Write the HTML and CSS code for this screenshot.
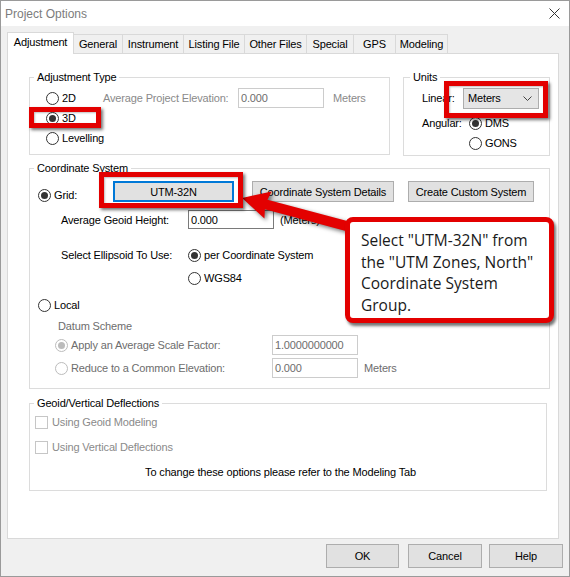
FILE: index.html
```html
<!DOCTYPE html>
<html>
<head>
<meta charset="utf-8">
<link rel="stylesheet" href="styles.css">
</head>
<body>
<div class="window">
  <div class="titlebar">
    <span class="title">Project Options</span>
    <svg class="close" width="11" height="11" viewBox="0 0 11 11"><path d="M0.5 0.5L10.5 10.5M10.5 0.5L0.5 10.5" stroke="#333" stroke-width="1" fill="none"/></svg>
  </div>
  <div class="tabs">
    <div class="tab sel t-adj">Adjustment</div>
    <div class="tab t-gen">General</div>
    <div class="tab t-ins">Instrument</div>
    <div class="tab t-lst">Listing File</div>
    <div class="tab t-oth">Other Files</div>
    <div class="tab t-spc">Special</div>
    <div class="tab t-gps">GPS</div>
    <div class="tab t-mod">Modeling</div>
  </div>
  <div class="panel">
    <div class="toprow">
      <div class="group g-adj">
        <div class="legend">Adjustment Type</div>
        <div class="row first">
          <label class="radio w-2d"><span class="rb"></span>2D</label>
          <span class="dim w-ape">Average Project Elevation:</span>
          <span class="tb dis w86">0.000</span>
          <span class="dim unit">Meters</span>
        </div>
        <div class="row"><label class="radio"><span class="rb on"></span>3D</label></div>
        <div class="row"><label class="radio"><span class="rb"></span>Levelling</label></div>
      </div>
      <div class="group g-units">
        <div class="legend lg-units">Units</div>
        <div class="row first">
          <span class="w-lin">Linear:</span>
          <div class="select"><span>Meters</span><svg width="9" height="5" viewBox="0 0 9 5"><path d="M0.5 0.5L4.5 4.5L8.5 0.5" stroke="#444" stroke-width="1" fill="none"/></svg></div>
        </div>
        <div class="row r-ang">
          <span class="w-ang">Angular:</span>
          <label class="radio"><span class="rb on"></span>DMS</label>
        </div>
        <div class="row r-gons"><label class="radio"><span class="rb"></span>GONS</label></div>
      </div>
    </div>

    <div class="group g-coord">
      <div class="legend">Coordinate System</div>
      <div class="row r-grid">
        <label class="radio w-grid"><span class="rb on"></span>Grid:</label>
        <span class="btn focus w-utm">UTM-32N</span>
        <span class="btn w-csd">Coordinate System Details</span>
        <span class="btn w-ccs">Create Custom System</span>
      </div>
      <div class="row r-agh">
        <span class="w-lab">Average Geoid Height:</span>
        <span class="tb w86 h19">0.000</span>
        <span class="unit2">(Meters)</span>
      </div>
      <div class="row r-ell">
        <span class="w-lab">Select Ellipsoid To Use:</span>
        <label class="radio"><span class="rb on"></span>per Coordinate System</label>
      </div>
      <div class="row r-wgs"><label class="radio"><span class="rb"></span>WGS84</label></div>
      <div class="row r-local"><label class="radio"><span class="rb"></span>Local</label></div>
      <div class="row r-datum"><span class="dim2">Datum Scheme</span></div>
      <div class="row r-apply">
        <label class="radio dim2 w-loc"><span class="rb dis on"></span>Apply an Average Scale Factor:</label>
        <span class="tb dis w86">1.0000000000</span>
      </div>
      <div class="row r-reduce">
        <label class="radio dim2 w-loc"><span class="rb dis"></span>Reduce to a Common Elevation:</label>
        <span class="tb dis w86">0.000</span>
        <span class="dim2 unit2">Meters</span>
      </div>
    </div>

    <div class="group g-geoid">
      <div class="legend">Geoid/Vertical Deflections</div>
      <div class="row r-cb1"><label class="check dim"><span class="cb"></span>Using Geoid Modeling</label></div>
      <div class="row r-cb2"><label class="check dim"><span class="cb"></span>Using Vertical Deflections</label></div>
      <div class="row r-note">To change these options please refer to the Modeling Tab</div>
    </div>
  </div>

  <div class="footer">
    <span class="btn fbtn w-ok">OK</span>
    <span class="btn fbtn w-cancel">Cancel</span>
    <span class="btn fbtn w-help">Help</span>
  </div>

  <svg class="arrow" width="570" height="577" viewBox="0 0 570 577">
    <g transform="translate(242 198) rotate(15)">
      <polygon points="0,0 27,-14 25,-5 128,-5 128,5 25,5 27,14" fill="#e30000"/>
    </g>
  </svg>
  <div class="hl hl1"></div>
  <div class="hl hl2"></div>
  <div class="hl hl3"></div>
  <div class="callout">Select "UTM-32N" from<br>the "UTM Zones, North"<br>Coordinate System<br>Group.</div>
</div>
</body>
</html>
```

FILE: styles.css
```css
body {
  margin: 0;
  font-family: "Liberation Sans", Arial, sans-serif;
  font-size: 11px;
  letter-spacing: -0.15px;
  color: #000;
}

.window {
  position: relative;
  width: 570px;
  height: 577px;
  box-sizing: border-box;
  border: 1px solid #9a9a9a;
  background: #f0f0f0;
  overflow: hidden;
}

.titlebar {
  height: 25px;
  background: #fff;
  display: flex;
  align-items: center;
  justify-content: space-between;
  padding: 0 9px 0 4px;
}

.title {
  font-size: 12px;
  letter-spacing: 0;
  color: #7c7c7c;
}

.close { display: block; }

.tabs {
  display: flex;
  align-items: flex-end;
  height: 27px;
  margin-left: 6px;
}

.tab {
  box-sizing: border-box;
  height: 19px;
  border: 1px solid #d9d9d9;
  border-bottom: none;
  background: #f0f0f0;
  margin-left: -1px;
  display: flex;
  align-items: center;
  justify-content: center;
  padding-bottom: 1px;
}

.tab.sel {
  position: relative;
  z-index: 1;
  height: 22px;
  margin-bottom: -1px;
  margin-left: 0;
  background: #fff;
  padding-bottom: 3px;
}

.t-adj { width: 67px; }
.t-gen { width: 50px; }
.t-ins { width: 62px; }
.t-lst { width: 62px; }
.t-oth { width: 63px; }
.t-spc { width: 48px; }
.t-gps { width: 43px; }
.t-mod { width: 53px; }

.panel {
  box-sizing: border-box;
  margin-left: 6px;
  width: 552px;
  height: 486px;
  border: 1px solid #d9d9d9;
  background: #fff;
  padding: 23px 0 0 21px;
}

.toprow {
  display: flex;
  align-items: flex-start;
  gap: 13px;
}

.group {
  box-sizing: border-box;
  border: 1px solid #dcdcdc;
}

.legend {
  display: table;
  line-height: 13px;
  margin: -7px 0 0 4px;
  padding: 0 3px;
  background: #fff;
}

.lg-units { margin-left: 6px; }

.row {
  display: flex;
  align-items: center;
  height: 20px;
  white-space: nowrap;
}

.radio, .check {
  display: flex;
  align-items: center;
  gap: 3px;
}

.check { gap: 4px; }

.rb {
  flex: none;
  width: 13px;
  height: 13px;
  box-sizing: border-box;
  border: 1px solid #333;
  border-radius: 50%;
  background: #fff;
  display: flex;
  align-items: center;
  justify-content: center;
}

.rb.on::after {
  content: "";
  width: 7px;
  height: 7px;
  border-radius: 50%;
  background: #333;
}

.rb.dis { border-color: #bcbcbc; }
.rb.dis.on::after { background: #bcbcbc; }

.cb {
  flex: none;
  width: 13px;
  height: 13px;
  box-sizing: border-box;
  border: 1px solid #c6c6c6;
  background: #fff;
}

.tb {
  box-sizing: border-box;
  height: 20px;
  border: 1px solid #7a7a7a;
  background: #fff;
  padding: 0 2px;
  display: flex;
  align-items: center;
}

.tb.dis {
  border-color: #cccccc;
  color: #6d6d6d;
}

.h19 { height: 19px; }
.w86 { width: 86px; }

.dim { color: #8a8a8a; }
.dim2 { color: #6d6d6d; }

.btn {
  box-sizing: border-box;
  height: 21px;
  border: 1px solid #adadad;
  background: #e1e1e1;
  display: flex;
  align-items: center;
  justify-content: center;
}

.btn.focus { border: 2px solid #0078d7; }

/* Adjustment type group */
.g-adj { width: 361px; height: 78px; }
.g-adj .row { padding-left: 16px; }
.first { margin-top: 4px; }
.w-2d { width: 57px; }
.w-ape { width: 135px; }
.unit { margin-left: 9px; }

/* Units group */
.g-units { width: 147px; height: 79px; }
.g-units .row { padding-left: 18px; }
.w-lin { width: 41px; }
.select {
  box-sizing: border-box;
  width: 76px;
  height: 21px;
  border: 1px solid #adadad;
  background: #e5e5e5;
  display: flex;
  align-items: center;
  justify-content: space-between;
  padding: 0 6px 0 4px;
}
.r-ang { margin-top: 5px; }
.w-ang { width: 47px; }
.g-units .r-gons { padding-left: 65px; }

/* Coordinate system group */
.g-coord { width: 521px; height: 221px; margin-top: 12px; }
.r-grid { margin-top: 6px; height: 21px; padding-left: 8px; }
.w-grid { width: 75px; margin-top: 7px; }
.w-utm { width: 121px; }
.w-csd { width: 142px; margin-left: 18px; }
.w-ccs { width: 126px; margin-left: 14px; }
.r-agh { margin-top: 8px; height: 19px; padding-left: 31px; }
.w-lab { width: 127px; }
.unit2 { margin-left: 6px; }
.r-ell { margin-top: 16px; padding-left: 31px; }
.r-wgs { margin-top: 3px; padding-left: 158px; }
.r-local { margin-top: 7px; padding-left: 8px; }
.r-datum { margin-top: 1px; height: 19px; padding-left: 28px; }
.r-apply { padding-left: 25px; }
.r-reduce { margin-top: 3px; padding-left: 25px; }
.w-loc { width: 217px; }

/* Geoid group */
.g-geoid { width: 518px; height: 88px; margin-top: 14px; }
.r-cb1 { margin-top: 2px; padding-left: 5px; }
.r-cb2 { margin-top: 5px; padding-left: 5px; }
.r-note { margin-top: 5px; justify-content: center; padding-right: 15px; }

/* Footer */
.footer {
  display: flex;
  justify-content: flex-end;
  margin-top: 5px;
  padding-right: 6px;
}
.fbtn { height: 24px; }
.w-ok { width: 73px; }
.w-cancel { width: 74px; margin-left: 9px; }
.w-help { width: 74px; margin-left: 7px; }

/* Annotations (overlay) */
.arrow {
  position: absolute;
  left: -1px;
  top: -1px;
  filter: drop-shadow(2px 2px 2px rgba(0, 0, 0, 0.55));
}

.hl {
  position: absolute;
  box-sizing: border-box;
  border: 5px solid #e30000;
  box-shadow: 2px 2px 3px rgba(0, 0, 0, 0.55), inset 1px 1px 2px rgba(0, 0, 0, 0.25);
}

.hl1 { left: 28px; top: 106px; width: 72px; height: 21px; }
.hl2 { left: 443px; top: 80px; width: 104px; height: 37px; }
.hl3 { left: 98px; top: 171px; width: 144px; height: 36px; }

.callout {
  position: absolute;
  left: 344px;
  top: 216px;
  width: 209px;
  height: 106px;
  box-sizing: border-box;
  border: 5px solid #e30000;
  border-radius: 8px;
  background: #fff;
  box-shadow: 2px 3px 3px rgba(0, 0, 0, 0.55);
  padding: 8px 0 0 11px;
  font-family: "Open Sans", "Noto Sans", sans-serif;
  font-size: 15.5px;
  letter-spacing: 0;
  line-height: 21.5px;
  color: #1a1a1a;
}
```
